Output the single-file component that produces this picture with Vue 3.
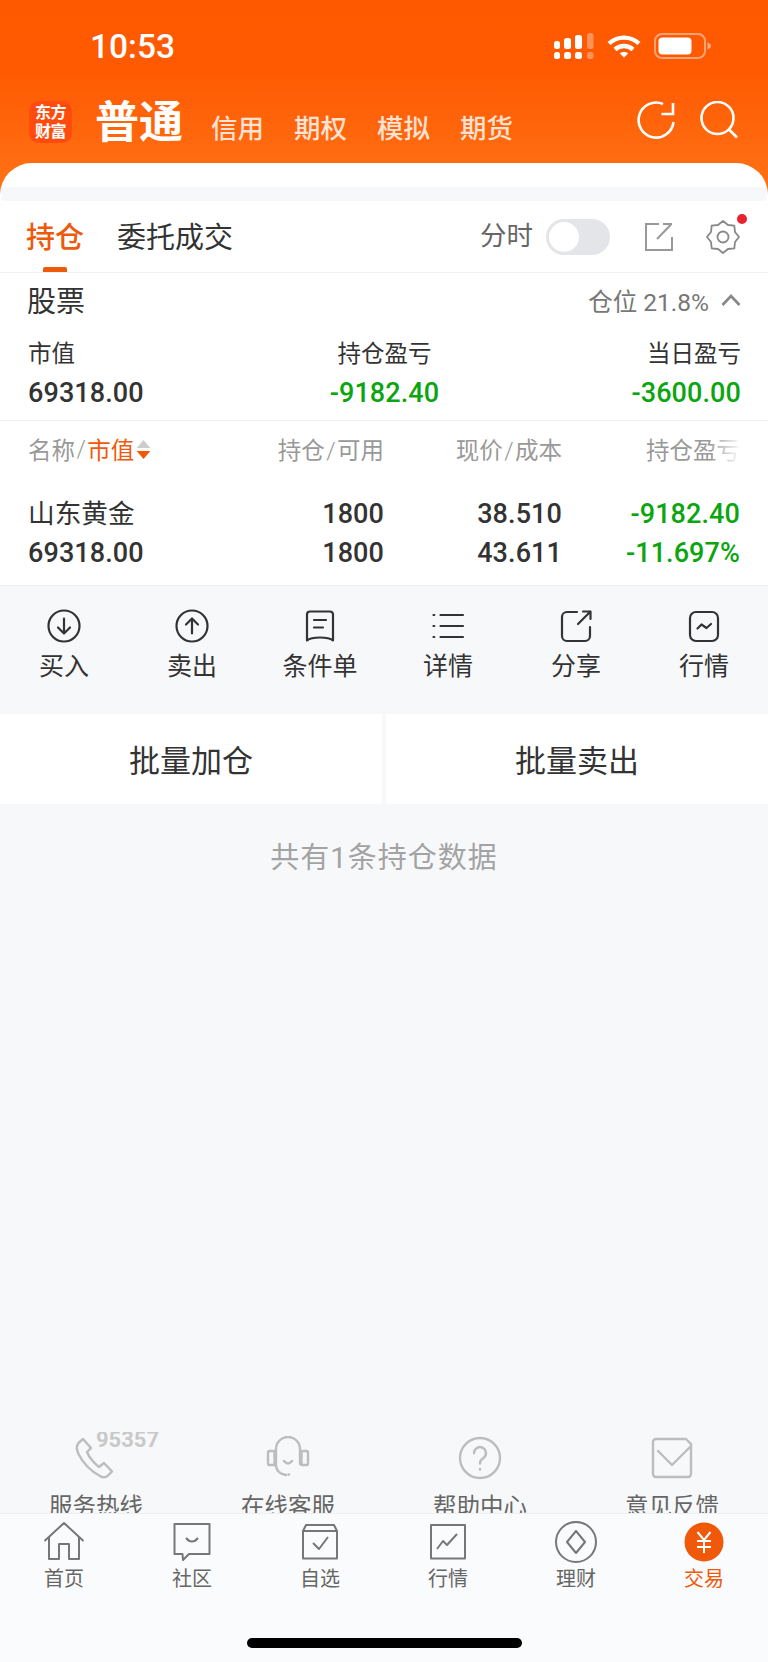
<template>
  <div class="page">
    <header class="top">
      <div class="status">
        <span class="time">10:53</span>
        <div class="status-icons">
          <svg class="signal" width="40" height="26" viewBox="0 0 40 26" fill="#fff">
            <rect x="0" y="8" width="6" height="8" rx="2.5" />
            <rect x="10" y="5" width="7" height="11" rx="2.5" />
            <rect x="21" y="2" width="7" height="14" rx="2.5" />
            <rect x="33" y="0" width="6.5" height="16" rx="2.5" opacity=".35" />
            <rect x="0" y="19" width="6" height="7" rx="2.5" />
            <rect x="10" y="19" width="7" height="7" rx="2.5" />
            <rect x="21" y="19" width="7" height="7" rx="2.5" />
            <rect x="33" y="19" width="6.5" height="7" rx="2.5" opacity=".35" />
          </svg>
          <svg width="34" height="25" viewBox="0 0 34 25" fill="none" stroke="#fff" stroke-width="4.4">
            <path d="M2 9.5a22 22 0 0 1 30 0" />
            <path d="M8 15.5a13.5 13.5 0 0 1 18 0" />
            <path d="M12.8 19.2l4.2 4.6 4.2-4.6a6.4 6.4 0 0 0-8.4 0Z" fill="#fff" stroke="none" />
          </svg>
          <svg width="57" height="26" viewBox="0 0 57 26">
            <rect x="1" y="1" width="50" height="24" rx="7" fill="none" stroke="#fff" stroke-opacity=".45" stroke-width="2" />
            <rect x="4.5" y="4.5" width="33" height="17" rx="4" fill="#fff" />
            <path d="M53.5 9.5c2 .6 3.5 2 3.5 3.500s-1.500 2.900-3.500 3.500Z" fill="#fff" fill-opacity=".5" />
          </svg>
        </div>
      </div>
      <nav class="nav">
        <div class="logo"><span>东方</span><span>财富</span></div>
        <span class="nav-main">普通</span>
        <div class="nav-tabs">
          <span v-for="t in navTabs" :key="t">{{ t }}</span>
        </div>
        <div class="nav-icons">
          <svg width="38" height="38" viewBox="0 0 38 38" fill="none" stroke="#fff" stroke-width="2.6">
            <path d="M36.500 21A17.500 17.500 0 1 1 26 3" />
            <path d="M36 2v11H24.500" />
          </svg>
          <svg width="38" height="38" viewBox="0 0 38 38" fill="none" stroke="#fff" stroke-width="2.6">
            <circle cx="17.500" cy="17" r="16" />
            <path d="M29 28.500l8 8" />
          </svg>
        </div>
      </nav>
      <div class="sheet"><div class="sheet-band"></div></div>
    </header>

    <section class="tabs">
      <span class="tab active">持仓</span>
      <span class="tab">委托成交</span>
      <div class="tabs-right">
        <span class="fenshi">分时</span>
        <span class="toggle"><i></i></span>
        <svg class="share" width="30" height="30" viewBox="0 0 30 30" fill="none" stroke="#999" stroke-width="2">
          <path d="M15 2H2v26h26V15" />
          <path d="M13 17L27 2.500M19 2h9" />
        </svg>
        <span class="gear">
          <svg width="34" height="34" viewBox="0 0 34 34" fill="none" stroke="#888" stroke-width="1.8" stroke-linejoin="round">
            <path :d="gearPath" />
            <circle cx="17" cy="17" r="5.500" />
          </svg>
          <i class="dot"></i>
        </span>
      </div>
    </section>

    <section class="summary">
      <div class="summary-head">
        <span class="summary-title">股票</span>
        <div class="position">
          <span>仓位 21.8%</span>
          <svg width="20" height="12" viewBox="0 0 20 12" fill="none" stroke="#888" stroke-width="2.6">
            <path d="M1.500 11L10 2l8.500 9" />
          </svg>
        </div>
      </div>
      <div class="summary-grid">
        <div v-for="s in summary" :key="s.label" class="summary-cell">
          <div class="summary-label">{{ s.label }}</div>
          <div class="num" :class="{ green: s.green }">{{ s.value }}</div>
        </div>
      </div>
    </section>

    <section class="holdings">
      <div class="grid table-head">
        <div class="name-head">
          <span>名称</span><span class="slash">/</span><span class="orange">市值</span>
          <svg width="15" height="19" viewBox="0 0 14 18">
            <path d="M7 0l6.500 7.500H.5Z" fill="#ccc" />
            <path d="M7 18l6.500-7.500H.5Z" fill="#f0590a" />
          </svg>
        </div>
        <div class="r">持仓<span class="slash">/</span>可用</div>
        <div class="r">现价<span class="slash">/</span>成本</div>
        <div class="r fade">持仓盈亏</div>
      </div>
      <div class="grid table-row">
        <div class="stock">山东黄金</div>
        <div class="r num">1800</div>
        <div class="r num">38.510</div>
        <div class="r num green">-9182.40</div>
        <div class="num">69318.00</div>
        <div class="r num">1800</div>
        <div class="r num">43.611</div>
        <div class="r num green">-11.697%</div>
      </div>
    </section>

    <section class="actions">
      <div v-for="a in actions" :key="a.label" class="action">
        <svg width="36" height="36" viewBox="0 0 36 36" fill="none" stroke="#333" stroke-width="2.2" stroke-linecap="round" stroke-linejoin="round">
          <path :d="a.icon" />
        </svg>
        <span>{{ a.label }}</span>
      </div>
    </section>

    <section class="batch">
      <div>批量加仓</div>
      <div>批量卖出</div>
    </section>

    <main class="rest">
      <div class="count">共有1条持仓数据</div>
      <div class="help">
        <div v-for="h in helps" :key="h.label" class="help-item">
          <span v-if="h.hotline" class="hotline">95357</span>
          <svg width="44" height="44" viewBox="0 0 44 44" fill="none" stroke="#bdbdbd" stroke-width="2.4" stroke-linecap="round" stroke-linejoin="round">
            <path :d="h.icon" />
          </svg>
          <span class="help-label">{{ h.label }}</span>
        </div>
      </div>
    </main>

    <footer class="footer">
      <div class="tabbar">
        <div v-for="t in tabbar" :key="t.label" class="tabbar-item" :class="{ current: t.current }">
          <svg width="44" height="44" viewBox="0 0 44 44" fill="none" stroke="#777" stroke-width="2" stroke-linejoin="round">
            <template v-if="t.current">
              <circle cx="22" cy="22" r="19.500" fill="#f0590a" stroke="none" />
              <path d="M15.500 12l6.500 8 6.500-8M22 20v13M15 21h14M15 27h14" stroke="#fff" />
            </template>
            <path v-else :d="t.icon" />
          </svg>
          <span>{{ t.label }}</span>
        </div>
      </div>
      <div class="home-bar"></div>
    </footer>
  </div>
</template>

<script setup>
const navTabs = ['信用', '期权', '模拟', '期货'];

const summary = [
  { label: '市值', value: '69318.00' },
  { label: '持仓盈亏', value: '-9182.40', green: true },
  { label: '当日盈亏', value: '-3600.00', green: true },
];

const actions = [
  { label: '买入', icon: 'M33.500 18a15.500 15.500 0 1 1-31 0a15.500 15.500 0 1 1 31 0ZM18 10.500v15M12 19.500l6 6 6-6' },
  { label: '卖出', icon: 'M33.500 18a15.500 15.500 0 1 1-31 0a15.500 15.500 0 1 1 31 0ZM18 25.500v-15M12 16.500l6-6 6 6' },
  { label: '条件单', icon: 'M5 6.500a3 3 0 0 1 3-3h20a3 3 0 0 1 3 3v26c-3-2.500-8-3-13-3s-10 .5-13 3ZM12 12h12M12 19.500h9' },
  { label: '详情', icon: 'M10.500 7h22.500M10.500 18h22.500M10.500 29h22.500M3.500 7h.8M3.500 18h.8M3.500 29h.8' },
  { label: '分享', icon: 'M19 4H9a5 5 0 0 0-5 5v19a5 5 0 0 0 5 5h18a5 5 0 0 0 5-5V19M20 16L32.500 3.500M25 3.500h7.500V11' },
  { label: '行情', icon: 'M10 4h16a6 6 0 0 1 6 6v17a6 6 0 0 1-6 6H10a6 6 0 0 1-6-6V10a6 6 0 0 1 6-6ZM11.500 20.500l4-4 5 3.500 4.500-4' },
];

const helps = [
  {
    label: '服务热线',
    hotline: true,
    icon: 'M9 3L4.500 7C2 10 2.500 14 4.500 18C9 27 15 34 26 40C29 42 32 41.500 34 39.500L38 35.500L30 27L25 31C20 27 15 21 13 16L17 12Z',
  },
  {
    label: '在线客服',
    icon: 'M10 16V13a12 12 0 0 1 24 0v15M10 28v-12M3.500 15h5v14h-5a1.500 1.500 0 0 1-1.500-1.500v-11a1.500 1.500 0 0 1 1.500-1.500ZM35.500 15h5a1.500 1.500 0 0 1 1.500 1.500v11a1.500 1.500 0 0 1-1.500 1.500h-5ZM18 25q4 5 8 0M10 29c0 6 4 9 10 10M22.500 38.500h.5',
  },
  {
    label: '帮助中心',
    icon: 'M42 22a20 20 0 1 1-40 0a20 20 0 1 1 40 0ZM16 17a6 6 0 1 1 9.500 5c-2.500 1.500-3.500 2.500-3.500 5.500M22 33v.5',
  },
  {
    label: '意见反馈',
    icon: 'M6 3h30l5 5v30a3 3 0 0 1-3 3H6a3 3 0 0 1-3-3V6a3 3 0 0 1 3-3ZM8 15l14 14 19-19',
  },
];

const tabbar = [
  { label: '首页', icon: 'M2.500 21L22 3l19.500 18M7 17v22h10V24h10v15h10V17' },
  { label: '社区', icon: 'M4.500 4h35v30H19l-6 6-.5-6h-8ZM16 18q6 7 12 0' },
  { label: '自选', icon: 'M5 38.500V11l3-6h28l3 6v27.500ZM5 11h34M15 23l6 6 9-12' },
  { label: '行情', icon: 'M5 5h34v33.500H5ZM11 29l6-8 4 4 10-11' },
  { label: '理财', icon: 'M42 22a20 20 0 1 1-40 0a20 20 0 1 1 40 0ZM22 11l9 11-9 11-9-11Z' },
  { label: '交易', current: true },
];

// 8-tooth gear outline, rounded by the stroke join
const gearPath = (() => {
  const pts = [];
  for (let i = 0; i < 16; i++) {
    const a = (Math.PI * 2 * i) / 16 - Math.PI / 2;
    const r = i % 2 === 0 ? 16 : 13;
    pts.push(`${(17 + r * Math.cos(a)).toFixed(1)} ${(17 + r * Math.sin(a)).toFixed(1)}`);
  }
  return `M${pts.join('L')}Z`;
})();
</script>

<style>
html, body { margin: 0; background: #f9fafb; }
</style>

<style scoped>
.page {
  width: 768px;
  height: 1662px;
  display: flex;
  flex-direction: column;
  overflow: hidden;
  background: #f7f8fa;
  color: #333;
  font-family: Roboto, "Noto Sans CJK SC", sans-serif;
}

.top {
  height: 201px;
  flex: none;
  display: flex;
  flex-direction: column;
  background: linear-gradient(180deg, #ff5900 0%, #ff5a02 35%, #ff7418 100%);
}
.status {
  height: 92px;
  flex: none;
  display: flex;
  align-items: center;
  justify-content: space-between;
  padding: 0 57px 0 90px;
}
.time { color: #fff; font-size: 33.500px; font-weight: 500; }
.status-icons { display: flex; align-items: center; gap: 13px; }
.status-icons svg { display: block; }

.nav {
  height: 71px;
  flex: none;
  box-sizing: border-box;
  display: flex;
  align-items: flex-start;
  padding: 9px 30px 0 29px;
}
.logo {
  width: 43px;
  height: 42px;
  border-radius: 10px;
  background: #ff4c0e;
  color: #fff;
  font-size: 16px;
  font-weight: 700;
  line-height: 19px;
  display: flex;
  flex-direction: column;
  align-items: center;
  justify-content: center;
  letter-spacing: -.5px;
}
.nav-main {
  margin-left: 23px;
  font-size: 44px;
  line-height: 44px;
  font-weight: 700;
  color: #fff;
}
.nav-tabs {
  margin-left: 28px;
  padding-top: 9px;
  display: flex;
  gap: 30px;
  color: rgba(255, 255, 255, .82);
  font-size: 26.500px;
  line-height: 38px;
  font-weight: 500;
}
.nav-icons { margin-left: auto; display: flex; gap: 25px; }

.sheet {
  flex: 1;
  background: #fff;
  border-radius: 32px 32px 0 0;
  display: flex;
  align-items: flex-end;
}
.sheet-band { width: 100%; height: 14px; margin: 0 2px; background: #f7f8fa; }

.tabs {
  height: 71px;
  flex: none;
  display: flex;
  align-items: center;
  padding: 0 28px 0 26px;
  gap: 33px;
  background: #fff;
  border-bottom: 1px solid #f1f1f1;
  box-sizing: content-box;
}
.tab { position: relative; font-size: 29px; line-height: 75px; height: 71px; color: #333; }
.tab.active { color: #ee5a0c; font-weight: 500; }
.tab.active::after {
  content: "";
  position: absolute;
  left: 17px;
  bottom: 0;
  width: 24px;
  height: 5px;
  border-radius: 2px 2px 0 0;
  background: #ee5a0c;
}
.tabs-right { margin-left: auto; display: flex; align-items: center; }
.fenshi { font-size: 26.500px; line-height: 34px; margin-top: -2px; color: #666; }
.toggle {
  margin-left: 13px;
  width: 64px;
  height: 36px;
  border-radius: 18px;
  background: #e4e5e8;
  display: flex;
  align-items: center;
  padding-left: 3px;
  box-sizing: border-box;
}
.toggle i { width: 30px; height: 30px; border-radius: 50%; background: #fff; }
.share { margin-left: 34px; }
.gear { position: relative; margin-left: 32px; height: 34px; }
.gear svg { display: block; }
.dot {
  position: absolute;
  top: -6px;
  right: -7px;
  width: 10px;
  height: 10px;
  border-radius: 50%;
  background: #e8222e;
}

.summary {
  height: 147px;
  flex: none;
  padding: 0 27px 0 28px;
  background: #fff;
  border-bottom: 1px solid #f0f0f0;
}
.summary-head {
  height: 58px;
  display: flex;
  align-items: center;
  justify-content: space-between;
}
.summary-title { font-size: 29px; line-height: 36px; margin-left: -1px; color: #333; }
.position { display: flex; align-items: center; gap: 12px; margin-top: -4px; font-size: 24.500px; color: #777; }
.summary-grid { display: grid; grid-template-columns: 1fr 1fr 1fr; }
.summary-cell { text-align: center; }
.summary-cell:first-child { text-align: left; }
.summary-cell:last-child { text-align: right; }
.summary-label { font-size: 23.500px; line-height: 46px; color: #333; }
.num { font-size: 27px; line-height: 33px; font-weight: 500; letter-spacing: .1px; color: #333; }
.num.green { color: #0aa50f; }

.holdings { flex: none; height: 164px; background: #fff; border-bottom: 1px solid #eff0f2; }
.grid {
  display: grid;
  grid-template-columns: 1fr 178px 178px 178px;
  padding: 0 28px;
}
.r { text-align: right; }
.table-head {
  height: 56px;
  align-items: center;
  font-size: 23.500px;
  color: #999;
}
.name-head { display: flex; align-items: center; }
.name-head svg { margin-left: 2px; }
.slash { margin: 0 1.500px; font-weight: 300; }
.orange { color: #ee5a0c; }
.fade { position: relative; }
.fade::after {
  content: "";
  position: absolute;
  top: 0;
  bottom: 0;
  right: 0;
  width: 28px;
  background: linear-gradient(90deg, rgba(255, 255, 255, .1), rgba(255, 255, 255, .95));
}
.table-row { padding-top: 18px; grid-auto-rows: 39px; align-items: center; }
.stock { font-size: 26.700px; line-height: 39px; color: #333; }

.actions {
  height: 128px;
  flex: none;
  display: grid;
  grid-template-columns: repeat(6, 1fr);
  padding-top: 22px;
  box-sizing: border-box;
}
.action { display: flex; flex-direction: column; align-items: center; }
.action span { margin-top: 6px; font-size: 25px; line-height: 34px; color: #333; }

.batch {
  height: 90px;
  flex: none;
  display: grid;
  grid-template-columns: 1fr 1fr;
  gap: 4px;
}
.batch div {
  display: flex;
  align-items: center;
  justify-content: center;
  padding-bottom: 2px;
  background: #fff;
  font-size: 31px;
  color: #333;
}

.rest { flex: 1; min-height: 0; display: flex; flex-direction: column; }
.count {
  margin-top: 34px;
  text-align: center;
  font-size: 29px;
  line-height: 40px;
  letter-spacing: 1px;
  color: #a3a3a3;
}
.help {
  margin-top: auto;
  height: 81px;
  overflow: hidden;
  display: grid;
  grid-template-columns: repeat(4, 192px);
}
.help-item {
  position: relative;
  display: flex;
  flex-direction: column;
  align-items: center;
  padding-top: 4px;
}
.help-label { margin-top: 12px; font-size: 23.500px; line-height: 30px; color: #666; white-space: nowrap; }
.hotline {
  position: absolute;
  left: 96px;
  top: -5px;
  font-size: 22px;
  line-height: 26px;
  font-weight: 700;
  color: #c9c9c9;
}

.footer {
  height: 149px;
  flex: none;
  background: #fafbfc;
  border-top: 1px solid #efefef;
  box-sizing: border-box;
}
.tabbar {
  display: grid;
  grid-template-columns: repeat(6, 1fr);
  padding-top: 6px;
}
.tabbar-item { display: flex; flex-direction: column; align-items: center; }
.tabbar-item span { margin-top: 3px; font-size: 20px; line-height: 24px; color: #666; }
.tabbar-item.current span { color: #f0590a; }
.home-bar {
  width: 275px;
  height: 10px;
  margin: 47px auto 0;
  border-radius: 5px;
  background: #000;
}
</style>
